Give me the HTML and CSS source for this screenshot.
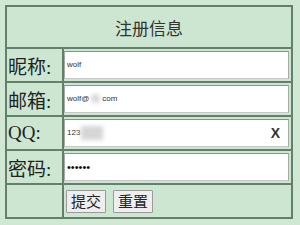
FILE: index.html
```html
<!DOCTYPE html>
<html lang="zh-CN">
<head>
    <meta charset="UTF-8">
    <title>注册信息</title>
    <link rel="stylesheet" href="styles.css">
</head>
<body>
    <form class="reg-form">
        <table class="reg-table">
            <colgroup>
                <col class="col-label">
                <col class="col-field">
            </colgroup>
            <tr>
                <th colspan="2" class="title">注册信息</th>
            </tr>
            <tr>
                <td class="label">昵称:</td>
                <td class="field"><div class="box">wolf</div></td>
            </tr>
            <tr>
                <td class="label">邮箱:</td>
                <td class="field"><div class="box">wolf@<span class="blur blur-dot"></span>com</div></td>
            </tr>
            <tr>
                <td class="label">QQ:</td>
                <td class="field"><div class="box">123<span class="blur blur-block"></span><span class="clear">X</span></div></td>
            </tr>
            <tr>
                <td class="label">密码:</td>
                <td class="field"><div class="box pwd">&bull;&bull;&bull;&bull;&bull;&bull;</div></td>
            </tr>
            <tr>
                <td class="label"></td>
                <td class="field buttons">
                    <button type="button" class="btn">提交</button>
                    <button type="button" class="btn">重置</button>
                </td>
            </tr>
        </table>
    </form>
</body>
</html>
```

FILE: styles.css
```css
* {
    margin: 0;
    padding: 0;
    box-sizing: border-box;
}

body {
    background-color: #cfe7d3;
    font-family: "Liberation Serif", "Noto Sans CJK SC", serif;
    color: #222;
}

.reg-form {
    padding: 5px;
}

.reg-table {
    width: 288px;
    table-layout: fixed;
    border-collapse: collapse;
    border: 2px solid #70907a;
    background-color: #cde6d1;
}

.col-label {
    width: 57px;
}

.reg-table th,
.reg-table td {
    border: 2px solid #62806a;
}

.title {
    height: 42px;
    font-size: 17px;
    font-weight: normal;
    text-align: center;
    color: #333;
}

.label {
    height: 34px;
    font-size: 19px;
    padding-left: 1px;
    color: #222;
}

.field {
    padding: 2px 2px 2px 0;
}

.box {
    position: relative;
    height: 28px;
    background-color: #fff;
    border: 1px solid #a4aca6;
    border-top-color: #8a928c;
    border-bottom-color: #c4c8c5;
    font-family: "Liberation Sans", Arial, sans-serif;
    font-size: 8px;
    line-height: 26px;
    padding-left: 2px;
    color: #333;
}

.pwd {
    font-size: 11px;
    letter-spacing: 0;
    color: #111;
}

.blur {
    display: inline-block;
    vertical-align: middle;
    background-color: #d6d6d6;
    filter: blur(2px);
}

.blur-dot {
    width: 9px;
    height: 9px;
    border-radius: 50%;
    margin: 0 2px;
}

.blur-block {
    width: 22px;
    height: 14px;
    margin-left: 1px;
}

.clear {
    position: absolute;
    right: 8px;
    top: 0;
    font-size: 14px;
    font-weight: bold;
    color: #333;
}

.buttons {
    height: 29px;
    padding-left: 2px;
}

.btn {
    height: 23px;
    width: 40px;
    margin-right: 3px;
    font-family: "Noto Sans CJK SC", sans-serif;
    font-size: 15px;
    line-height: 20px;
    color: #222;
    background-color: #eeeeee;
    border: 1px solid #9a9a9a;
    border-radius: 1px;
}
```
